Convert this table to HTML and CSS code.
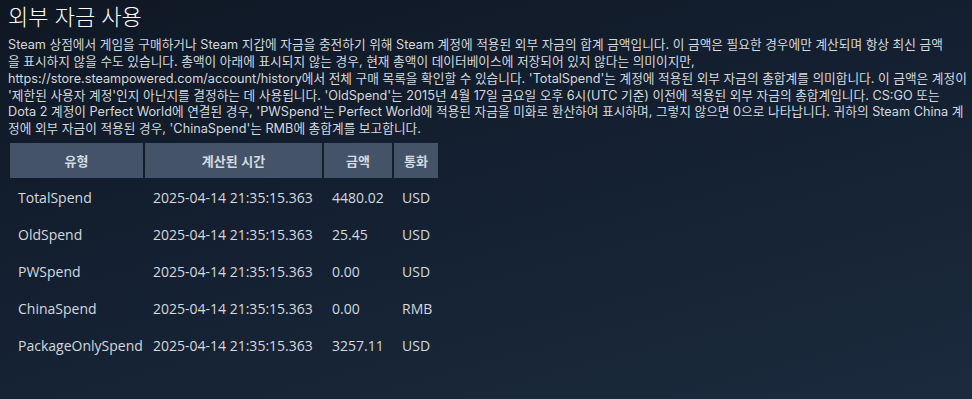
FILE: index.html
```html
<!DOCTYPE html>
<html lang="ko">
<head>
<meta charset="utf-8">
<title>외부 자금 사용</title>
<link rel="stylesheet" href="styles.css">
</head>
<body>
<main class="page">
  <h2 class="title">외부 자금 사용</h2>
  <p class="desc">Steam 상점에서 게임을 구매하거나 Steam 지갑에 자금을 충전하기 위해 Steam 계정에 적용된 외부 자금의 합계 금액입니다. 이 금액은 필요한 경우에만 계산되며 항상 최신 금액<br>을 표시하지 않을 수도 있습니다. 총액이 아래에 표시되지 않는 경우, 현재 총액이 데이터베이스에 저장되어 있지 않다는 의미이지만,<br>https://store.steampowered.com/account/history에서 전체 구매 목록을 확인할 수 있습니다. 'TotalSpend'는 계정에 적용된 외부 자금의 총합계를 의미합니다. 이 금액은 계정이<br>'제한된 사용자 계정'인지 아닌지를 결정하는 데 사용됩니다. 'OldSpend'는 2015년 4월 17일 금요일 오후 6시(UTC 기준) 이전에 적용된 외부 자금의 총합계입니다. CS:GO 또는<br>Dota 2 계정이 Perfect World에 연결된 경우, 'PWSpend'는 Perfect World에 적용된 자금을 미화로 환산하여 표시하며, 그렇지 않으면 0으로 나타납니다. 귀하의 Steam China 계<br>정에 외부 자금이 적용된 경우, 'ChinaSpend'는 RMB에 총합계를 보고합니다.</p>
  <table class="spend">
    <thead>
      <tr>
        <th class="c-type">유형</th>
        <th class="c-time">계산된 시간</th>
        <th class="c-amt">금액</th>
        <th class="c-cur">통화</th>
      </tr>
    </thead>
    <tbody>
      <tr><td>TotalSpend</td><td>2025-04-14 21:35:15.363</td><td>4480.02</td><td>USD</td></tr>
      <tr><td>OldSpend</td><td>2025-04-14 21:35:15.363</td><td>25.45</td><td>USD</td></tr>
      <tr><td>PWSpend</td><td>2025-04-14 21:35:15.363</td><td>0.00</td><td>USD</td></tr>
      <tr><td>ChinaSpend</td><td>2025-04-14 21:35:15.363</td><td>0.00</td><td>RMB</td></tr>
      <tr><td>PackageOnlySpend</td><td>2025-04-14 21:35:15.363</td><td>3257.11</td><td>USD</td></tr>
    </tbody>
  </table>
</main>
</body>
</html>
```
FILE: styles.css
```css
html, body {
  margin: 0;
  padding: 0;
  height: 100%;
}
body {
  background: linear-gradient(165deg, #0f1723 0%, #142031 45%, #1b2a3d 100%);
  color: #d3d9de;
  font-family: "Open Sans", "Noto Sans CJK KR", sans-serif;
}
.page {
  padding: 0 8px;
}
.title {
  margin: 0;
  padding-top: 1px;
  font-size: 22px;
  font-weight: 300;
  line-height: 28px;
  color: #ffffff;
  font-family: "Noto Sans CJK KR", sans-serif;
}
.desc {
  margin: 8px 0 3px;
  font-family: "Inter", "Noto Sans CJK KR", sans-serif;
  font-size: 12.7px;
  line-height: 16.85px;
  white-space: nowrap;
  color: #d3d9de;
}
.spend {
  border-spacing: 2px;
  font-size: 14px;
  color: #d3d9de;
}
.spend th {
  background: #445367;
  height: 35px;
  padding: 0;
  font-size: 13px;
  font-weight: 700;
  text-align: center;
  color: #d4dbe2;
  font-family: "Noto Sans CJK KR", sans-serif;
}
.spend td {
  height: 35px;
  padding: 0 0 0 8px;
  white-space: nowrap;
}
.c-type { width: 133px; }
.c-time { width: 177px; }
.c-amt { width: 68px; }
.c-cur { width: 44px; }
```
